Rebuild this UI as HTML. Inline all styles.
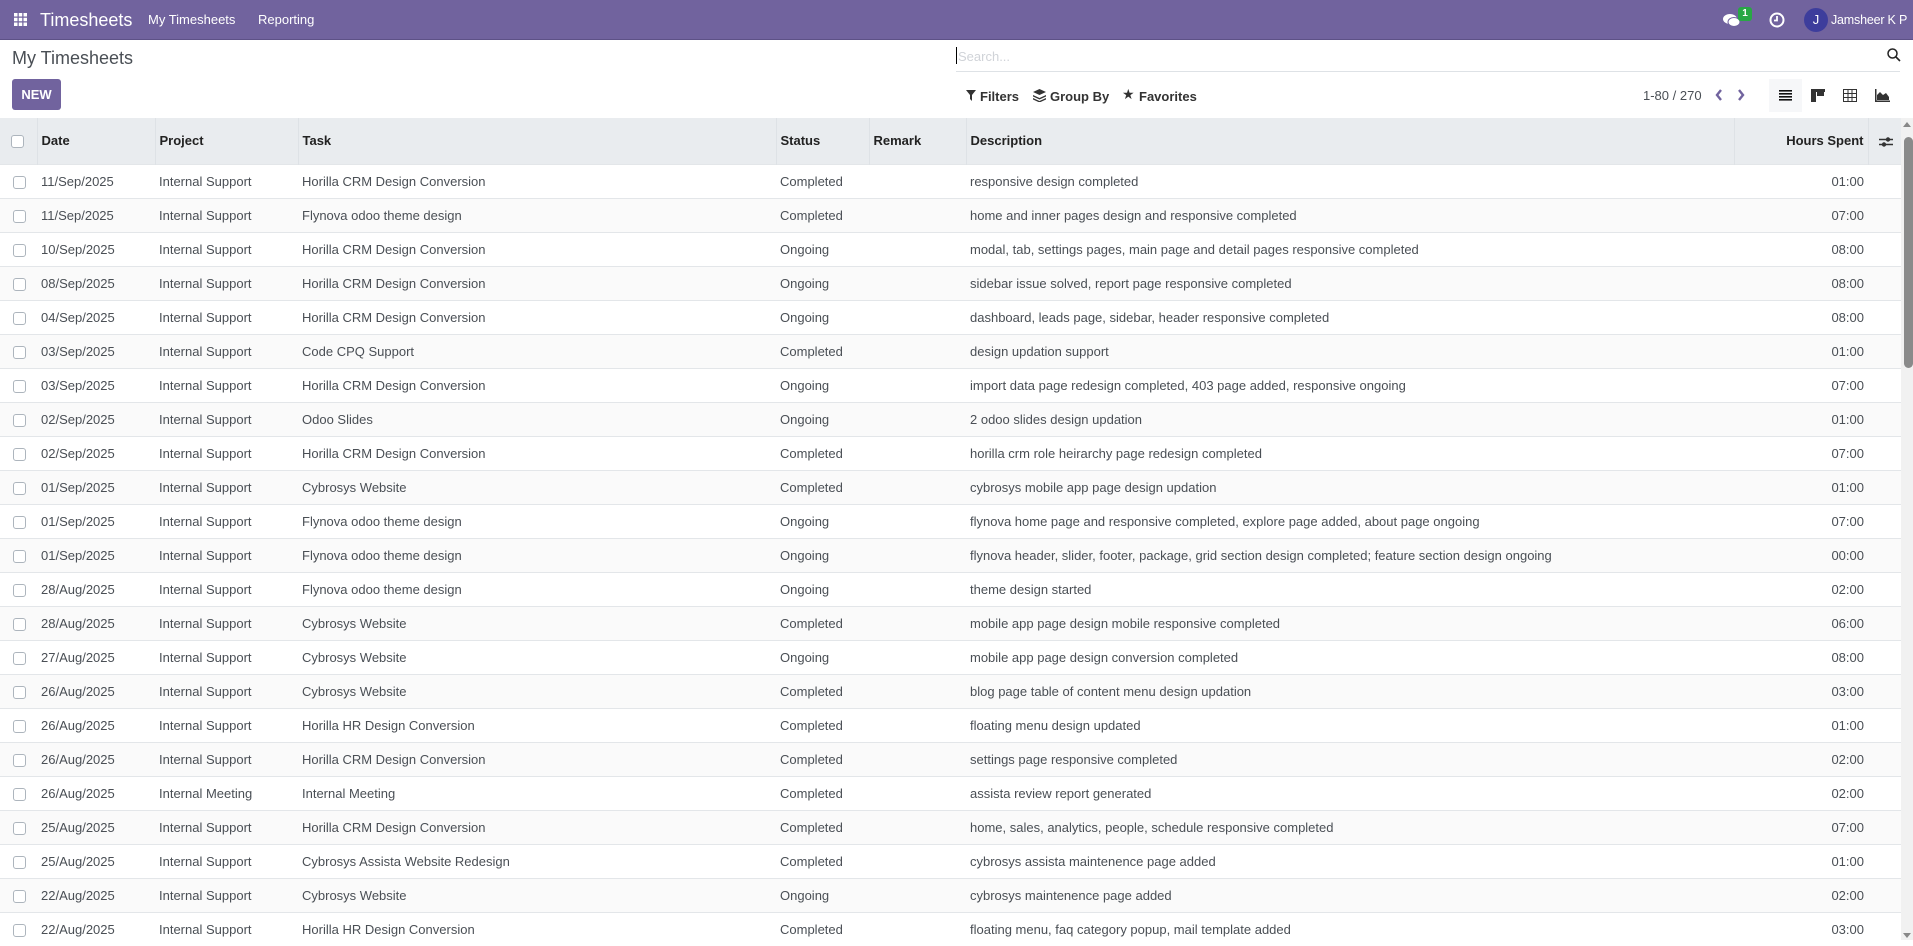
<!DOCTYPE html>
<html><head><meta charset="utf-8"><style>
*{box-sizing:border-box;margin:0;padding:0}
body{width:1913px;height:940px;overflow:hidden;font-family:"Liberation Sans",sans-serif;color:#4a4f55;background:#fff;position:relative;font-size:13px}
.nav{position:absolute;left:0;top:0;width:1913px;height:40px;background:#71639e;border-bottom:1px solid #5d5186;color:#fff}
.nav span{position:absolute;top:0;line-height:40px}
.abs{position:absolute}
table{border-collapse:collapse;position:absolute;left:0;top:118px;width:1901px;table-layout:fixed}
th{background:#e9ecef;height:46px;text-align:left;font-weight:bold;color:#222;font-size:13px;border-left:1px solid #dee2e6;padding-left:4px}
th:first-child{border-left:none}
td{height:34px;border-top:1px solid #e3e6e9;padding-left:4px;white-space:nowrap;overflow:hidden}
tr:nth-child(odd) td{background:#fafafa}
.cb{display:inline-block;width:13px;height:13px;border:1px solid #adb5bd;border-radius:3px;margin-left:9px;vertical-align:middle;background:#fff}
td.r,th.r{text-align:right;padding-right:4px}
</style></head><body>
<div class="nav">
<svg class="abs" style="left:14px;top:13px" width="13" height="13" viewBox="0 0 13 13" fill="#fff"><rect x="0" y="0" width="3.5" height="3.5"/><rect x="4.75" y="0" width="3.5" height="3.5"/><rect x="9.5" y="0" width="3.5" height="3.5"/><rect x="0" y="4.75" width="3.5" height="3.5"/><rect x="4.75" y="4.75" width="3.5" height="3.5"/><rect x="9.5" y="4.75" width="3.5" height="3.5"/><rect x="0" y="9.5" width="3.5" height="3.5"/><rect x="4.75" y="9.5" width="3.5" height="3.5"/><rect x="9.5" y="9.5" width="3.5" height="3.5"/></svg>
<span style="left:40px;font-size:18px">Timesheets</span>
<span style="left:148px;font-size:13px">My Timesheets</span>
<span style="left:258px;font-size:13px">Reporting</span>
<svg class="abs" style="left:1723px;top:13px" width="18" height="15" viewBox="0 0 18 15" fill="#fff"><ellipse cx="7" cy="6" rx="7" ry="5"/><ellipse cx="11" cy="9" rx="6" ry="4.5" stroke="#71639e" stroke-width="1"/></svg>
<div class="abs" style="left:1738px;top:7px;width:14px;height:14px;background:#28a745;border-radius:3px;font-size:10px;font-weight:bold;text-align:center;line-height:14px">1</div>
<svg class="abs" style="left:1769px;top:12px" width="16" height="16" viewBox="0 0 16 16"><circle cx="8" cy="8" r="6.5" fill="none" stroke="#fff" stroke-width="2"/><path d="M8 4v4.5H5" stroke="#fff" stroke-width="1.8" fill="none"/></svg>
<div class="abs" style="left:1804px;top:8px;width:24px;height:24px;border-radius:50%;background:#3d3d9c;text-align:center;line-height:24px;font-size:13px">J</div>
<span style="left:1831px;font-size:12.5px;letter-spacing:-0.2px">Jamsheer K P</span>
</div>
<div class="abs" style="left:12px;top:48px;font-size:18px;color:#4a4f55">My Timesheets</div>
<div class="abs" style="left:12px;top:79px;width:49px;height:31px;background:#71639e;border-radius:3px;color:#fff;font-weight:bold;font-size:13px;text-align:center;line-height:31px">NEW</div>
<div class="abs" style="left:956px;top:47px;width:1px;height:17px;background:#000"></div>
<div class="abs" style="left:958px;top:49px;color:#d0d3d8;font-size:13px">Search...</div>
<div class="abs" style="left:956px;top:71px;width:944px;height:1px;background:#dee2e6"></div>
<svg class="abs" style="left:1887px;top:48px" width="14" height="14" viewBox="0 0 14 14"><circle cx="5.5" cy="5.5" r="4.5" fill="none" stroke="#222" stroke-width="1.5"/><path d="M9 9l4 4" stroke="#222" stroke-width="1.6"/></svg>
<svg class="abs" style="left:966px;top:90px" width="10" height="11" viewBox="0 0 10 11" fill="#333"><path d="M0 0h10L6 5v6L4 9V5z"/></svg>
<div class="abs" style="left:980px;top:89px;font-size:13px;color:#333;font-weight:bold">Filters</div>
<svg class="abs" style="left:1033px;top:89px" width="13" height="13" viewBox="0 0 13 13" fill="#333"><path d="M6.5 0L13 3 6.5 6 0 3z"/><path d="M0 6l6.5 3L13 6v1.5L6.5 10.5 0 7.5z"/><path d="M0 9l6.5 3L13 9v1.5L6.5 13.5 0 10.5z"/></svg>
<div class="abs" style="left:1050px;top:89px;font-size:13px;color:#333;font-weight:bold">Group By</div>
<div class="abs" style="left:1122px;top:86px;font-size:14px;color:#333">★</div>
<div class="abs" style="left:1139px;top:89px;font-size:13px;color:#333;font-weight:bold">Favorites</div>
<div class="abs" style="left:1643px;top:88px;font-size:13px;color:#4a4f55">1-80 / 270</div>
<svg class="abs" style="left:1714px;top:88px" width="10" height="14" viewBox="0 0 10 14"><path d="M7 2L3 7l4 5" stroke="#71639e" stroke-width="2.4" fill="none"/></svg>
<svg class="abs" style="left:1736px;top:88px" width="10" height="14" viewBox="0 0 10 14"><path d="M3 2l4 5-4 5" stroke="#71639e" stroke-width="2.4" fill="none"/></svg>
<div class="abs" style="left:1769px;top:79px;width:33px;height:33px;background:#f6f7f9"></div>
<svg class="abs" style="left:1779px;top:90px" width="13" height="11" viewBox="0 0 13 11" fill="#111"><rect y="0" width="13" height="1.6"/><rect y="3" width="13" height="1.6"/><rect y="6" width="13" height="1.6"/><rect y="9" width="13" height="1.6"/></svg>
<svg class="abs" style="left:1811px;top:89px" width="14" height="13" viewBox="0 0 14 13" fill="#333"><rect width="14" height="3"/><rect width="5" height="13"/><rect x="6" width="7" height="7"/></svg>
<svg class="abs" style="left:1843px;top:89px" width="14" height="13" viewBox="0 0 14 13" fill="none" stroke="#333"><rect x=".5" y=".5" width="13" height="12"/><path d="M.5 4.5h13M.5 8.5h13M5 .5v12M9 .5v12"/></svg>
<svg class="abs" style="left:1875px;top:89px" width="15" height="13" viewBox="0 0 15 13" fill="#333"><path d="M0 0h1.5v11.5H15V13H0z"/><path d="M2 11V6l3-3 3 3 3-2 3 4v3z"/></svg>
<table>
<colgroup><col style="width:37px"><col style="width:118px"><col style="width:143px"><col style="width:478px"><col style="width:93px"><col style="width:97px"><col style="width:768px"><col style="width:134px"><col style="width:33px"></colgroup>
<tr><th><span class="cb" style="margin-left:7px"></span></th><th>Date</th><th>Project</th><th>Task</th><th>Status</th><th>Remark</th><th>Description</th><th class="r">Hours Spent</th><th><svg width="14" height="12" viewBox="0 0 14 12" style="margin-left:6px;vertical-align:middle"><path d="M0 3.5h14M0 8.5h14" stroke="#333" stroke-width="1.4"/><circle cx="9" cy="3.5" r="2.2" fill="#333"/><circle cx="5" cy="8.5" r="2.2" fill="#333"/></svg></th></tr>
<tr><td><span class="cb"></span></td><td>11/Sep/2025</td><td>Internal Support</td><td>Horilla CRM Design Conversion</td><td>Completed</td><td></td><td>responsive design completed</td><td class="r">01:00</td><td></td></tr>
<tr><td><span class="cb"></span></td><td>11/Sep/2025</td><td>Internal Support</td><td>Flynova odoo theme design</td><td>Completed</td><td></td><td>home and inner pages design and responsive completed</td><td class="r">07:00</td><td></td></tr>
<tr><td><span class="cb"></span></td><td>10/Sep/2025</td><td>Internal Support</td><td>Horilla CRM Design Conversion</td><td>Ongoing</td><td></td><td>modal, tab, settings pages, main page and detail pages responsive completed</td><td class="r">08:00</td><td></td></tr>
<tr><td><span class="cb"></span></td><td>08/Sep/2025</td><td>Internal Support</td><td>Horilla CRM Design Conversion</td><td>Ongoing</td><td></td><td>sidebar issue solved, report page responsive completed</td><td class="r">08:00</td><td></td></tr>
<tr><td><span class="cb"></span></td><td>04/Sep/2025</td><td>Internal Support</td><td>Horilla CRM Design Conversion</td><td>Ongoing</td><td></td><td>dashboard, leads page, sidebar, header responsive completed</td><td class="r">08:00</td><td></td></tr>
<tr><td><span class="cb"></span></td><td>03/Sep/2025</td><td>Internal Support</td><td>Code CPQ Support</td><td>Completed</td><td></td><td>design updation support</td><td class="r">01:00</td><td></td></tr>
<tr><td><span class="cb"></span></td><td>03/Sep/2025</td><td>Internal Support</td><td>Horilla CRM Design Conversion</td><td>Ongoing</td><td></td><td>import data page redesign completed, 403 page added, responsive ongoing</td><td class="r">07:00</td><td></td></tr>
<tr><td><span class="cb"></span></td><td>02/Sep/2025</td><td>Internal Support</td><td>Odoo Slides</td><td>Ongoing</td><td></td><td>2 odoo slides design updation</td><td class="r">01:00</td><td></td></tr>
<tr><td><span class="cb"></span></td><td>02/Sep/2025</td><td>Internal Support</td><td>Horilla CRM Design Conversion</td><td>Completed</td><td></td><td>horilla crm role heirarchy page redesign completed</td><td class="r">07:00</td><td></td></tr>
<tr><td><span class="cb"></span></td><td>01/Sep/2025</td><td>Internal Support</td><td>Cybrosys Website</td><td>Completed</td><td></td><td>cybrosys mobile app page design updation</td><td class="r">01:00</td><td></td></tr>
<tr><td><span class="cb"></span></td><td>01/Sep/2025</td><td>Internal Support</td><td>Flynova odoo theme design</td><td>Ongoing</td><td></td><td>flynova home page and responsive completed, explore page added, about page ongoing</td><td class="r">07:00</td><td></td></tr>
<tr><td><span class="cb"></span></td><td>01/Sep/2025</td><td>Internal Support</td><td>Flynova odoo theme design</td><td>Ongoing</td><td></td><td>flynova header, slider, footer, package, grid section design completed; feature section design ongoing</td><td class="r">00:00</td><td></td></tr>
<tr><td><span class="cb"></span></td><td>28/Aug/2025</td><td>Internal Support</td><td>Flynova odoo theme design</td><td>Ongoing</td><td></td><td>theme design started</td><td class="r">02:00</td><td></td></tr>
<tr><td><span class="cb"></span></td><td>28/Aug/2025</td><td>Internal Support</td><td>Cybrosys Website</td><td>Completed</td><td></td><td>mobile app page design mobile responsive completed</td><td class="r">06:00</td><td></td></tr>
<tr><td><span class="cb"></span></td><td>27/Aug/2025</td><td>Internal Support</td><td>Cybrosys Website</td><td>Ongoing</td><td></td><td>mobile app page design conversion completed</td><td class="r">08:00</td><td></td></tr>
<tr><td><span class="cb"></span></td><td>26/Aug/2025</td><td>Internal Support</td><td>Cybrosys Website</td><td>Completed</td><td></td><td>blog page table of content menu design updation</td><td class="r">03:00</td><td></td></tr>
<tr><td><span class="cb"></span></td><td>26/Aug/2025</td><td>Internal Support</td><td>Horilla HR Design Conversion</td><td>Completed</td><td></td><td>floating menu design updated</td><td class="r">01:00</td><td></td></tr>
<tr><td><span class="cb"></span></td><td>26/Aug/2025</td><td>Internal Support</td><td>Horilla CRM Design Conversion</td><td>Completed</td><td></td><td>settings page responsive completed</td><td class="r">02:00</td><td></td></tr>
<tr><td><span class="cb"></span></td><td>26/Aug/2025</td><td>Internal Meeting</td><td>Internal Meeting</td><td>Completed</td><td></td><td>assista review report generated</td><td class="r">02:00</td><td></td></tr>
<tr><td><span class="cb"></span></td><td>25/Aug/2025</td><td>Internal Support</td><td>Horilla CRM Design Conversion</td><td>Completed</td><td></td><td>home, sales, analytics, people, schedule responsive completed</td><td class="r">07:00</td><td></td></tr>
<tr><td><span class="cb"></span></td><td>25/Aug/2025</td><td>Internal Support</td><td>Cybrosys Assista Website Redesign</td><td>Completed</td><td></td><td>cybrosys assista maintenence page added</td><td class="r">01:00</td><td></td></tr>
<tr><td><span class="cb"></span></td><td>22/Aug/2025</td><td>Internal Support</td><td>Cybrosys Website</td><td>Ongoing</td><td></td><td>cybrosys maintenence page added</td><td class="r">02:00</td><td></td></tr>
<tr><td><span class="cb"></span></td><td>22/Aug/2025</td><td>Internal Support</td><td>Horilla HR Design Conversion</td><td>Completed</td><td></td><td>floating menu, faq category popup, mail template added</td><td class="r">03:00</td><td></td></tr>
</table>
<div class="abs" style="left:1901px;top:118px;width:12px;height:822px;background:#f1f1f1"></div>
<div class="abs" style="left:1903px;top:122px;width:0;height:0;border-left:4px solid transparent;border-right:4px solid transparent;border-bottom:5px solid #888"></div>
<div class="abs" style="left:1904px;top:137px;width:9px;height:231px;background:#8a8a8a;border-radius:5px"></div>
<div class="abs" style="left:1903px;top:933px;width:0;height:0;border-left:4px solid transparent;border-right:4px solid transparent;border-top:5px solid #888"></div>
</body></html>
